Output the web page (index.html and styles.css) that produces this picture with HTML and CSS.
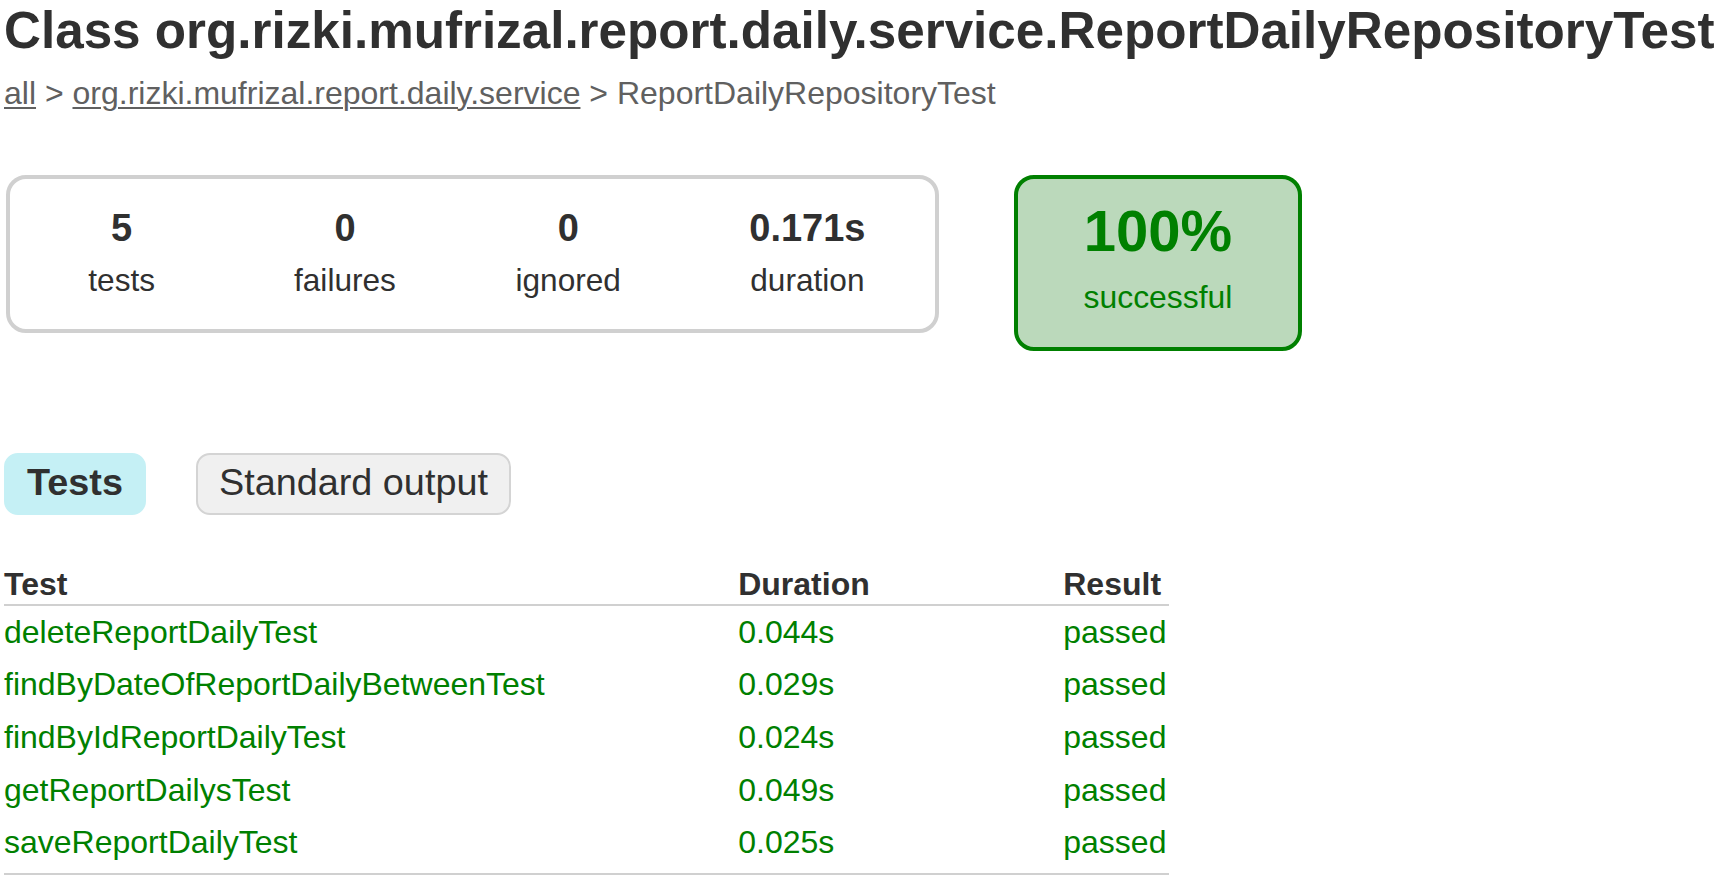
FILE: index.html
```html
<!DOCTYPE html>
<html lang="en">
<head>
<meta charset="utf-8">
<title>Test results - Class org.rizki.mufrizal.report.daily.service.ReportDailyRepositoryTest</title>
<link rel="stylesheet" href="styles.css">
</head>
<body>
<div class="content">
  <h1 class="title">Class org.rizki.mufrizal.report.daily.service.ReportDailyRepositoryTest</h1>
  <div class="breadcrumbs"><a href="#">all</a> &gt; <a href="#">org.rizki.mufrizal.report.daily.service</a> &gt; ReportDailyRepositoryTest</div>

  <div class="summary">
    <div class="summary-group">
      <div class="info-box"><div class="counter">5</div><p class="label">tests</p></div>
      <div class="info-box"><div class="counter">0</div><p class="label">failures</p></div>
      <div class="info-box"><div class="counter">0</div><p class="label">ignored</p></div>
      <div class="info-box info-duration"><div class="counter">0.171s</div><p class="label">duration</p></div>
    </div>
    <div class="success-rate">
      <div class="percent">100%</div>
      <p class="label">successful</p>
    </div>
  </div>

  <ul class="tab-links">
    <li class="tab selected"><a href="#">Tests</a></li>
    <li class="tab"><a href="#">Standard output</a></li>
  </ul>

  <table class="tests-table">
    <thead>
      <tr>
        <th class="col-test">Test</th>
        <th class="col-duration">Duration</th>
        <th class="col-result">Result</th>
      </tr>
    </thead>
    <tbody>
      <tr><td>deleteReportDailyTest</td><td>0.044s</td><td>passed</td></tr>
      <tr><td>findByDateOfReportDailyBetweenTest</td><td>0.029s</td><td>passed</td></tr>
      <tr><td>findByIdReportDailyTest</td><td>0.024s</td><td>passed</td></tr>
      <tr><td>getReportDailysTest</td><td>0.049s</td><td>passed</td></tr>
      <tr><td>saveReportDailyTest</td><td>0.025s</td><td>passed</td></tr>
    </tbody>
  </table>
</div>
</body>
</html>
```

FILE: styles.css
```css
html, body {
  margin: 0;
  padding: 0;
  background: #ffffff;
}

body {
  font-family: "Liberation Sans", Arial, Helvetica, sans-serif;
  font-size: 32px;
  color: #303030;
}

.content {
  padding-left: 4px;
  display: flex;
  flex-direction: column;
  align-items: flex-start;
}

.title {
  margin: 2px 0 0 0;
  font-size: 51.2px;
  line-height: 58px;
  font-weight: bold;
  white-space: nowrap;
  color: #303030;
}

.breadcrumbs {
  margin-top: 14.8px;
  font-size: 32px;
  line-height: 36px;
  color: #606060;
  white-space: nowrap;
}

.breadcrumbs a {
  color: #606060;
  text-decoration: underline;
  text-decoration-thickness: 2px;
  text-underline-offset: 3px;
}

.summary {
  margin-top: 64.2px;
  margin-left: 2px;
  display: flex;
  align-items: flex-start;
}

.summary-group {
  display: flex;
  width: 925px;
  border: 4px solid #d0d0d0;
  border-radius: 20px;
}

.info-box {
  width: 223.3px;
  padding-top: 27px;
  padding-bottom: 31.2px;
  text-align: center;
}

.info-box.info-duration {
  width: 255px;
}

.counter {
  font-size: 38px;
  line-height: 44px;
  font-weight: bold;
}

.label {
  margin: 11.8px 0 0 0;
  font-size: 31.6px;
  line-height: 36px;
}

.success-rate {
  margin-left: 75px;
  width: 280px;
  padding-top: 19.6px;
  padding-bottom: 31.6px;
  border: 4px solid #008000;
  border-radius: 20px;
  background-color: #bbd9bb;
  color: #008000;
  text-align: center;
}

.percent {
  font-size: 58px;
  line-height: 64px;
  font-weight: bold;
}

.success-rate .label {
  margin-top: 16.8px;
  font-size: 31.9px;
}

.tab-links {
  list-style: none;
  margin: 102.3px 0 0 0;
  padding: 0;
  display: flex;
  gap: 50px;
}

.tab {
  padding: 5px 21px 9px 21px;
  border: 2px solid #d4d4d4;
  border-radius: 14px;
  background-color: #f0f0f0;
  font-size: 37.8px;
  line-height: 44px;
}

.tab.selected {
  background-color: #c5f0f5;
  border-color: #c5f0f5;
  font-weight: bold;
}

.tab a {
  color: #303030;
  text-decoration: none;
  display: block;
}

.tests-table {
  margin-top: 50.8px;
  border-collapse: separate;
  border-spacing: 0;
  border-bottom: 2px solid #d0d0d0;
  font-size: 32px;
  line-height: 36px;
}

.tests-table th {
  text-align: left;
  white-space: nowrap;
  font-weight: bold;
  color: #303030;
  padding: 0 0 2px 193.5px;
  border-bottom: 2px solid #d0d0d0;
}

.tests-table th.col-test {
  width: 540px;
  padding-left: 0;
}

.tests-table td {
  white-space: nowrap;
  color: #008000;
  padding: 7.6px 0 9.05px 193.5px;
}

.tests-table tbody tr:last-child td {
  padding-bottom: 12.4px;
}

.tests-table td:first-child {
  padding-left: 0;
}

.tests-table td:last-child,
.tests-table th:last-child {
  padding-right: 3px;
}
```
